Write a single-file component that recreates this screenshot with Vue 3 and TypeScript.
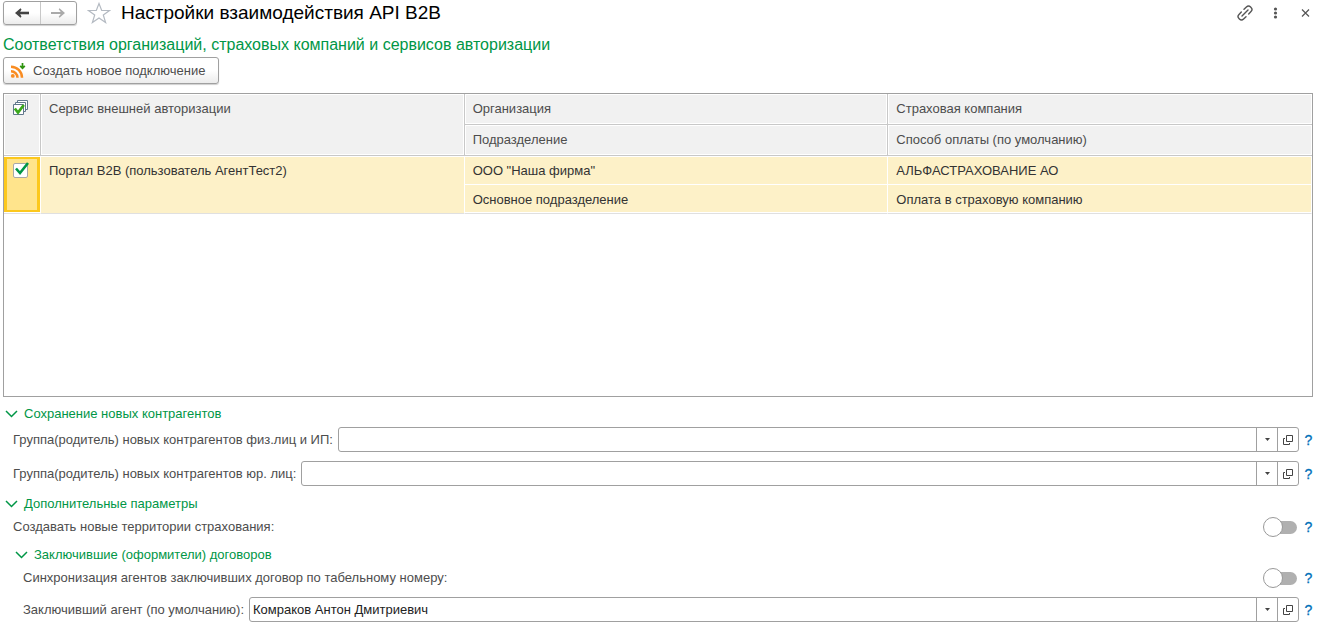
<script setup lang="ts">
import { ref } from 'vue'

interface Connection {
  active: boolean
  service: string
  organization: string
  department: string
  insurer: string
  payment: string
}

const connections = ref<Connection[]>([
  {
    active: true,
    service: 'Портал B2B (пользователь АгентТест2)',
    organization: 'ООО "Наша фирма"',
    department: 'Основное подразделение',
    insurer: 'АЛЬФАСТРАХОВАНИЕ АО',
    payment: 'Оплата в страховую компанию',
  },
])

const personGroup = ref('')
const companyGroup = ref('')
const agent = ref('Комраков Антон Дмитриевич')
const createTerritories = ref(false)
const syncAgents = ref(false)
const savingOpen = ref(true)
const extraOpen = ref(true)
const signersOpen = ref(true)
</script>

<template>
  <main class="page">
    <header class="titlebar">
      <div class="nav">
        <button type="button" aria-label="Назад">
          <svg width="16" height="12" viewBox="0 0 16 12"><path d="M15 6H4" fill="none" stroke="#444" stroke-width="2.6" /><path d="M1 6 6.500 1.200 7.500 2.500 5.500 6 7.500 9.500 6.500 10.800Z" fill="#444" /></svg>
        </button>
        <button type="button" aria-label="Вперед">
          <svg width="16" height="12" viewBox="0 0 16 12"><path d="M1 6h12" fill="none" stroke="#aaa" stroke-width="2" /><path d="M15 6 9.500 1.200 8.700 2.200 11.500 6 8.700 9.800 9.500 10.800Z" fill="#aaa" /></svg>
        </button>
      </div>
      <button type="button" class="plain star" aria-label="В избранное">
        <svg width="24" height="22" viewBox="0 0 24 22"><path d="M12 1.500 14.700 8.500H22.500L16.300 13 18.600 20.500 12 16 5.400 20.500 7.700 13 1.500 8.500H9.300Z" fill="#fff" stroke="#b4bac2" stroke-width="1.200" /></svg>
      </button>
      <h1>Настройки взаимодействия API B2B</h1>
      <div class="tools">
        <button type="button" class="plain" aria-label="Ссылка">
          <svg width="16" height="16" viewBox="0 0 16 16" fill="none" stroke="#555" stroke-width="1.400" stroke-linecap="round"><path d="M5 11l6-6M7 4.300l2.400-2.300a3 3 0 0 1 4.200 0l.4.4a3 3 0 0 1 0 4.200L11.700 9M9 11.700l-2.400 2.300a3 3 0 0 1-4.200 0l-.4-.4a3 3 0 0 1 0-4.200L4.300 7" /></svg>
        </button>
        <button type="button" class="plain" aria-label="Ещё">
          <svg width="16" height="16" viewBox="0 0 16 16" fill="#555"><circle cx="8.500" cy="4" r="1.600" /><circle cx="8.500" cy="8" r="1.600" /><circle cx="8.500" cy="12" r="1.600" /></svg>
        </button>
        <button type="button" class="plain" aria-label="Закрыть">
          <svg width="16" height="16" viewBox="0 0 16 16"><path d="M5 4.500l7 7M12 4.500l-7 7" stroke="#555" stroke-width="1.200" /></svg>
        </button>
      </div>
    </header>

    <h2>Соответствия организаций, страховых компаний и сервисов авторизации</h2>

    <button type="button" class="create">
      <svg width="16" height="16" viewBox="0 0 16 16">
        <g fill="none" stroke="#f98c22" stroke-width="2.500"><path d="M1 3.700A11 11 0 0 1 12 14.700M1 8.200A6.500 6.500 0 0 1 7.500 14.700" /></g>
        <circle cx="2.800" cy="12.900" r="1.900" fill="#f98c22" />
        <path d="M12.500 0v5M10.200 2.800l2.300 2.500 2.300-2.500" fill="none" stroke="#2f9410" stroke-width="1.700" />
      </svg>
      <span>Создать новое подключение</span>
    </button>

    <div class="panel">
      <table>
        <colgroup><col class="flag" /><col /><col /><col /></colgroup>
        <thead>
          <tr>
            <th rowspan="2" class="mark" aria-label="Активность">
              <svg width="16" height="16" viewBox="0 0 16 16">
                <g fill="#fff" stroke="#60788c"><path d="M4.500.5h10v9h-10z" /><path d="M2.500 2.500h10v9h-10z" /><path d="M.5 4.500h10v10H.5z" /></g>
                <path d="M1.800 8.500 5 12.500 10.800 5" fill="none" stroke="#3aa81c" stroke-width="2.800" />
              </svg>
            </th>
            <th rowspan="2">Сервис внешней авторизации</th>
            <th>Организация</th>
            <th>Страховая компания</th>
          </tr>
          <tr>
            <th>Подразделение</th>
            <th>Способ оплаты (по умолчанию)</th>
          </tr>
        </thead>
        <tbody v-for="row in connections" :key="row.service">
          <tr>
            <td rowspan="2" class="mark current">
              <label class="tick">
                <input v-model="row.active" type="checkbox" aria-label="Активно" />
                <svg v-if="row.active" width="16" height="16" viewBox="0 0 16 16"><path d="M3 6.500 7 11 15 1" fill="none" stroke="#009646" stroke-width="2.600" /></svg>
              </label>
            </td>
            <td rowspan="2">{{ row.service }}</td>
            <td>{{ row.organization }}</td>
            <td>{{ row.insurer }}</td>
          </tr>
          <tr>
            <td>{{ row.department }}</td>
            <td>{{ row.payment }}</td>
          </tr>
        </tbody>
      </table>
    </div>

    <section>
      <button type="button" class="plain group" :aria-expanded="savingOpen" @click="savingOpen = !savingOpen">
        <svg width="13" height="8" viewBox="0 0 13 8"><path d="M1 1l5.500 5.500L12 1" /></svg>
        <span>Сохранение новых контрагентов</span>
      </button>
      <div v-if="savingOpen" class="body">
        <div class="row">
          <label for="person">Группа(родитель) новых контрагентов физ.лиц и ИП:</label>
          <div class="combo">
            <input id="person" v-model="personGroup" type="text" />
            <button type="button" aria-label="Выбрать"><svg width="5" height="3" viewBox="0 0 5 3"><path d="M0 0h5L2.500 3z" fill="#444" /></svg></button>
            <button type="button" aria-label="Открыть"><svg width="10" height="10" viewBox="0 0 10 10"><path d="M3.500.5h6v6h-6zM2 3.500H.5v6h6V8" fill="none" stroke="#444" /></svg></button>
          </div>
          <button type="button" class="plain help">?</button>
        </div>
        <div class="row">
          <label for="company">Группа(родитель) новых контрагентов юр. лиц:</label>
          <div class="combo">
            <input id="company" v-model="companyGroup" type="text" />
            <button type="button" aria-label="Выбрать"><svg width="5" height="3" viewBox="0 0 5 3"><path d="M0 0h5L2.500 3z" fill="#444" /></svg></button>
            <button type="button" aria-label="Открыть"><svg width="10" height="10" viewBox="0 0 10 10"><path d="M3.500.5h6v6h-6zM2 3.500H.5v6h6V8" fill="none" stroke="#444" /></svg></button>
          </div>
          <button type="button" class="plain help">?</button>
        </div>
      </div>
    </section>

    <section>
      <button type="button" class="plain group" :aria-expanded="extraOpen" @click="extraOpen = !extraOpen">
        <svg width="13" height="8" viewBox="0 0 13 8"><path d="M1 1l5.500 5.500L12 1" /></svg>
        <span>Дополнительные параметры</span>
      </button>
      <div v-if="extraOpen" class="body">
        <div class="row">
          <label for="territories">Создавать новые территории страхования:</label>
          <input id="territories" v-model="createTerritories" type="checkbox" class="switch" />
          <button type="button" class="plain help">?</button>
        </div>
        <section>
          <button type="button" class="plain group" :aria-expanded="signersOpen" @click="signersOpen = !signersOpen">
            <svg width="13" height="8" viewBox="0 0 13 8"><path d="M1 1l5.500 5.500L12 1" /></svg>
            <span>Заключившие (оформители) договоров</span>
          </button>
          <div v-if="signersOpen" class="body">
            <div class="row">
              <label for="sync">Синхронизация агентов заключивших договор по табельному номеру:</label>
              <input id="sync" v-model="syncAgents" type="checkbox" class="switch" />
              <button type="button" class="plain help">?</button>
            </div>
            <div class="row">
              <label for="agent">Заключивший агент (по умолчанию):</label>
              <div class="combo">
                <input id="agent" v-model="agent" type="text" />
                <button type="button" aria-label="Выбрать"><svg width="5" height="3" viewBox="0 0 5 3"><path d="M0 0h5L2.500 3z" fill="#444" /></svg></button>
                <button type="button" aria-label="Открыть"><svg width="10" height="10" viewBox="0 0 10 10"><path d="M3.500.5h6v6h-6zM2 3.500H.5v6h6V8" fill="none" stroke="#444" /></svg></button>
              </div>
              <button type="button" class="plain help">?</button>
            </div>
          </div>
        </section>
      </div>
    </section>
  </main>
</template>

<style>
body {
  margin: 0;
  background: #fff;
}
</style>

<style scoped>
.page {
  box-sizing: border-box;
  min-height: 100vh;
  padding: 0 5px 10px 3px;
  display: flex;
  flex-direction: column;
  font: 13px/18px "Liberation Sans", Arial, sans-serif;
  color: #4d4d4d;
}
button,
input {
  font: inherit;
  color: inherit;
  margin: 0;
}
svg {
  display: block;
  flex: none;
}
.plain {
  border: 0;
  padding: 0;
  background: none;
}
.titlebar {
  display: flex;
  align-items: center;
  height: 26px;
}
.nav {
  display: flex;
  box-sizing: border-box;
  width: 74px;
  height: 24px;
  border: 1px solid #a0a0a0;
  border-radius: 3px;
  background: linear-gradient(#fff 50%, #ececec);
  box-shadow: 0 1px 1px #d0d0d0;
}
.nav button {
  flex: 1;
  display: grid;
  place-items: center;
  padding: 0;
  border: 0;
  background: none;
}
.nav button + button {
  border-left: 1px solid #c8c8c8;
}
.star {
  margin-left: 10px;
}
h1 {
  flex: 1;
  margin: 0 0 0 10px;
  font-size: 19px;
  font-weight: 400;
  line-height: 26px;
  color: #000;
}
.tools {
  display: flex;
  gap: 14px;
}
h2 {
  margin: 9px 0 3px;
  font-size: 16px;
  font-weight: 400;
  line-height: 19px;
  color: #009646;
}
.create {
  align-self: flex-start;
  display: flex;
  align-items: center;
  gap: 7px;
  height: 27px;
  margin-bottom: 9px;
  padding: 0 13px 0 6px;
  border: 1px solid #a0a0a0;
  border-radius: 3px;
  background: linear-gradient(#fff 50%, #ececec);
  box-shadow: 0 1px 1px #d0d0d0;
}
.panel {
  flex: 1;
  border: 1px solid #a0a0a0;
}
table {
  width: 100%;
  table-layout: fixed;
  border-collapse: separate;
  border-spacing: 0;
}
.flag {
  width: 37px;
}
th,
td {
  box-sizing: border-box;
  padding: 6px 8px 4px;
  text-align: left;
  vertical-align: top;
  font-weight: 400;
}
th {
  height: 31px;
  background: #f1f1f1;
  border-right: 1px solid #c8c8c8;
  border-bottom: 1px solid #c8c8c8;
  box-shadow: inset 0 0 0 1px #fff;
}
th:last-child {
  border-right: 0;
}
td {
  height: 29px;
  background: #fdf1c8;
  border-right: 1px solid #fff;
  border-bottom: 1px solid #fff;
  color: #333;
}
tbody tr:first-child td {
  box-shadow: inset 0 1px #fff;
}
tbody tr:last-child td,
tbody td[rowspan] {
  border-bottom-color: #e0e0e0;
  box-shadow: inset 0 -1px #fff;
}
.mark {
  padding: 6px 0 0 9px;
}
tbody tr:first-child td.current {
  background: #ffe48c;
  box-shadow: inset 0 1px #fff, inset 0 -1px #fff, inset 0 0 0 3px #fcc81e;
}
.tick {
  display: grid;
  width: 16px;
  height: 16px;
}
.tick > * {
  grid-area: 1 / 1;
}
.tick input {
  appearance: none;
  box-sizing: border-box;
  align-self: end;
  width: 15px;
  height: 15px;
  border: 1px solid #a8a8a8;
  border-radius: 2px;
  background: #fff;
}
.tick svg {
  z-index: 1;
}
section {
  margin-top: 9px;
}
.panel + section {
  margin-top: 8px;
}
.group {
  display: flex;
  align-items: center;
  gap: 6px;
  margin: 0 0 4px 2px;
  color: #009646;
}
.group path {
  fill: none;
  stroke: #009646;
  stroke-width: 1.5;
}
.body {
  margin-left: 10px;
  display: flex;
  flex-direction: column;
  gap: 9px;
}
.body section {
  margin: 0;
}
.row {
  display: flex;
  align-items: center;
  gap: 5px;
}
.combo {
  flex: 1;
  box-sizing: border-box;
  display: flex;
  height: 25px;
  border: 1px solid #a0a0a0;
  border-radius: 3px;
  background: #fff;
}
.combo input {
  flex: 1;
  min-width: 0;
  padding: 0 3px;
  border: 0;
  background: none;
  color: #222;
}
.combo button {
  width: 21px;
  padding: 0;
  border: 0;
  border-left: 1px solid #a0a0a0;
  background: none;
  display: grid;
  place-items: center;
}
.help {
  width: 9px;
  color: #0070ba;
  font-size: 14px;
  -webkit-text-stroke: 0.3px #0070ba;
}
.switch {
  appearance: none;
  display: grid;
  align-items: center;
  width: 34px;
  height: 20px;
  margin: 0 2px 0 auto;
}
.switch::before,
.switch::after {
  content: "";
  grid-area: 1 / 1;
}
.switch::before {
  height: 13px;
  margin-left: 2px;
  border-radius: 7px;
  background: #b0b0b0;
}
.switch::after {
  box-sizing: border-box;
  width: 20px;
  height: 20px;
  border: 1px solid #999;
  border-radius: 50%;
  background: #fff;
}
.switch:checked::after {
  justify-self: end;
}
</style>
